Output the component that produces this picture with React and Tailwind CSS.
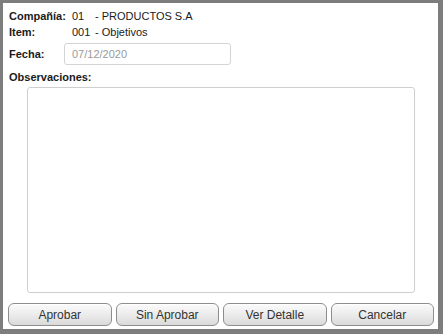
import React from 'react';

const buttons = ['Aprobar', 'Sin Aprobar', 'Ver Detalle', 'Cancelar'];

const App = () => {
    return (
        <div className="w-[443px] h-[334px] bg-[#7d7d7d] pt-[3px] pl-[3px] pr-[5px] pb-[5px] font-['Liberation_Sans',sans-serif] text-[11px] text-[#1a1a1a]">
            <div className="w-full h-full bg-white flex flex-col pl-[6px] pr-[3px]">
                {/* Header info */}
                <div className="flex items-center h-[16px] mt-[5px]">
                    <span className="w-[63px] font-bold">Compañía:</span>
                    <span className="w-[23px]">01</span>
                    <span>- PRODUCTOS S.A</span>
                </div>
                <div className="flex items-center h-[16px]">
                    <span className="w-[63px] font-bold">Item:</span>
                    <span className="w-[23px]">001</span>
                    <span>- Objetivos</span>
                </div>
                <div className="flex items-center mt-[3px]">
                    <span className="w-[55px] font-bold">Fecha:</span>
                    <div className="w-[167px] h-[22px] border border-[#d4d4d4] rounded-[3px] flex items-center px-[7px] text-[#9a9a9a]">
                        07/12/2020
                    </div>
                </div>
                <div className="font-bold mt-[4px] h-[16px] flex items-center">Observaciones:</div>
                <div className="ml-[18px] mr-[20px] mt-[2px] h-[206px] border border-[#cfcfcf] rounded-[3px]"></div>

                {/* Buttons */}
                <div className="flex gap-[4px] mt-auto mb-[3px] -ml-[1px] pr-[1px]">
                    {buttons.map((label) => (
                        <button
                            key={label}
                            className="flex-1 h-[23px] rounded-[6px] border border-[#8e8e8e] bg-gradient-to-b from-[#fbfbfb] via-[#ececec] to-[#dadada] text-[12px] text-[#333] shadow-[inset_0_1px_0_#ffffff]"
                        >
                            {label}
                        </button>
                    ))}
                </div>
            </div>
        </div>
    );
};

export default App;
